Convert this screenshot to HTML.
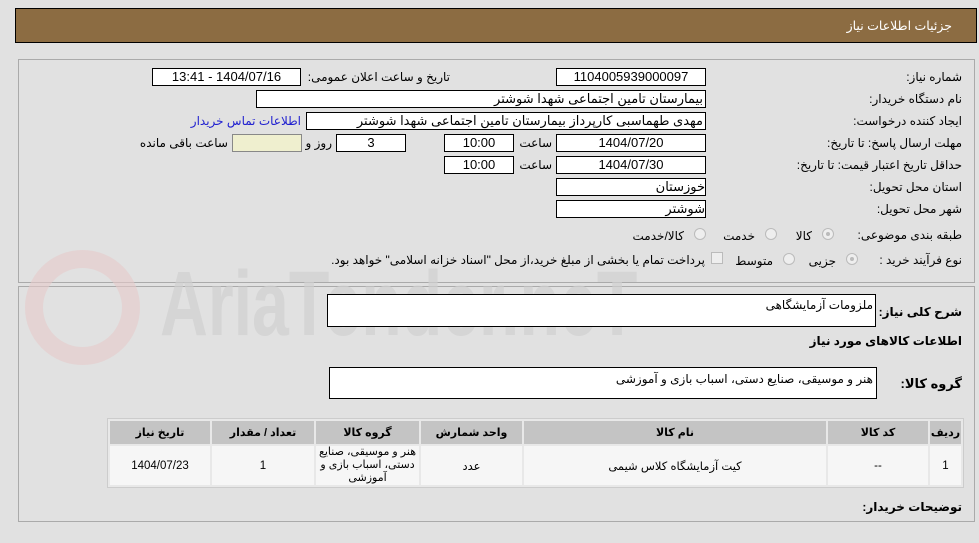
<!DOCTYPE html>
<html><head><meta charset="utf-8"><style>
body{margin:0;width:979px;height:543px;background:#e1e1e1;font-family:"Liberation Sans","DejaVu Sans",sans-serif;font-size:12px;color:#000;position:relative;overflow:hidden}
.a{position:absolute;white-space:nowrap}
.box{position:absolute;background:#fff;border:1px solid #000;box-sizing:border-box;height:18px;line-height:16px;font-size:13px;text-align:center;direction:rtl;overflow:hidden}
.l{position:absolute;direction:rtl;white-space:nowrap;font-size:12px;line-height:16px}
.r{right:17px}
.rad{position:absolute;width:12px;height:12px;border-radius:50%;border:1px solid #bbb;background:#eee;box-sizing:border-box}
.rad.on::after{content:"";position:absolute;left:3px;top:3px;width:4px;height:4px;border-radius:50%;background:#bbb}
table{border-collapse:separate;border-spacing:2px;position:absolute;left:107px;top:418px;width:857px;background:#e8e8e8;border:1px solid #ccc;direction:rtl;table-layout:fixed}
th{background:#c4c4c4;height:23px;font-size:11px;font-weight:bold;padding:0}
td{background:#f6f6f6;text-align:center;font-size:11.5px;height:39px;padding:0}
</style></head><body>
<div class="a" style="left:15px;top:8px;width:962px;height:35px;background:#8c6c42;border:1px solid #000;box-sizing:border-box"></div>
<div class="l" style="right:27px;top:18px;color:#fff;font-size:12.5px">جزئیات اطلاعات نیاز</div>
<div class="a" style="left:18px;top:59px;width:957px;height:224px;border:1px solid #aaa;box-sizing:border-box"></div>
<div class="a" style="left:18px;top:286px;width:957px;height:236px;border:1px solid #aaa;box-sizing:border-box"></div>
<!-- watermark -->
<div class="a" style="left:25px;top:250px;width:115px;height:115px;border-radius:50%;border:18px solid #e6caca;box-sizing:border-box;opacity:.6"></div>
<div class="a" style="left:160px;top:252px;font-size:92px;font-family:'Liberation Sans Narrow','Liberation Sans',sans-serif;font-weight:bold;color:#d0d0d0;transform:scaleX(0.72);transform-origin:left top;opacity:.7">AriaTender.neT</div>

<div class="l r" style="top:69px">شماره نیاز:</div>
<div class="box" style="left:556px;top:68px;width:150px">1104005939000097</div>
<div class="l" style="right:529px;top:69px">تاریخ و ساعت اعلان عمومی:</div>
<div class="box" style="left:152px;top:68px;width:149px">1404/07/16 - 13:41</div>

<div class="l r" style="top:91px">نام دستگاه خریدار:</div>
<div class="box" style="left:256px;top:90px;width:450px;text-align:right;padding-right:2px">بیمارستان تامین اجتماعی شهدا شوشتر</div>

<div class="l r" style="top:113px">ایجاد کننده درخواست:</div>
<div class="box" style="left:306px;top:112px;width:400px;text-align:right;padding-right:2px">مهدی طهماسبی کارپرداز بیمارستان تامین اجتماعی شهدا شوشتر</div>
<div class="l" style="right:678px;top:113px;color:#2020d0">اطلاعات تماس خریدار</div>

<div class="l r" style="top:135px">مهلت ارسال پاسخ: تا تاریخ:</div>
<div class="box" style="left:556px;top:134px;width:150px">1404/07/20</div>
<div class="l" style="right:427px;top:135px">ساعت</div>
<div class="box" style="left:444px;top:134px;width:70px">10:00</div>
<div class="box" style="left:336px;top:134px;width:70px">3</div>
<div class="l" style="right:647px;top:135px">روز و</div>
<div class="box" style="left:232px;top:134px;width:70px;background:#efefcf;border-color:#888"></div>
<div class="l" style="right:751px;top:135px">ساعت باقی مانده</div>

<div class="l r" style="top:157px">حداقل تاریخ اعتبار قیمت: تا تاریخ:</div>
<div class="box" style="left:556px;top:156px;width:150px">1404/07/30</div>
<div class="l" style="right:427px;top:157px">ساعت</div>
<div class="box" style="left:444px;top:156px;width:70px">10:00</div>

<div class="l r" style="top:179px">استان محل تحویل:</div>
<div class="box" style="left:556px;top:178px;width:150px;text-align:right">خوزستان</div>
<div class="l r" style="top:201px">شهر محل تحویل:</div>
<div class="box" style="left:556px;top:200px;width:150px;text-align:right">شوشتر</div>

<div class="l r" style="top:227px">طبقه بندی موضوعی:</div>
<div class="rad on" style="left:822px;top:228px"></div><div class="l" style="right:167px;top:228px">کالا</div>
<div class="rad" style="left:765px;top:228px"></div><div class="l" style="right:224px;top:228px">خدمت</div>
<div class="rad" style="left:694px;top:228px"></div><div class="l" style="right:295px;top:228px">کالا/خدمت</div>

<div class="l r" style="top:252px">نوع فرآیند خرید :</div>
<div class="rad on" style="left:846px;top:253px"></div><div class="l" style="right:143px;top:253px">جزیی</div>
<div class="rad" style="left:783px;top:253px"></div><div class="l" style="right:206px;top:253px">متوسط</div>
<div class="a" style="left:711px;top:252px;width:12px;height:12px;border:1px solid #bbb;background:#eee;box-sizing:border-box"></div>
<div class="l" style="right:274px;top:252px">پرداخت تمام یا بخشی از مبلغ خرید،از محل "اسناد خزانه اسلامی" خواهد بود.</div>

<div class="l r" style="top:304px;font-weight:bold">شرح کلی نیاز:</div>
<div class="a" style="left:327px;top:294px;width:549px;height:33px;background:#fff;border:1px solid #000;box-sizing:border-box"></div>
<div class="l" style="right:106px;top:297px">ملزومات آزمایشگاهی</div>
<div class="l r" style="top:333px;font-weight:bold">اطلاعات کالاهای مورد نیاز</div>
<div class="l r" style="top:376px;font-weight:bold;font-size:13px">گروه کالا:</div>
<div class="a" style="left:329px;top:367px;width:548px;height:32px;background:#fff;border:1px solid #000;box-sizing:border-box"></div>
<div class="l" style="right:106px;top:371px">هنر و موسیقی، صنایع دستی، اسباب بازی و آموزشی</div>

<table>
<colgroup><col style="width:31px"><col style="width:100px"><col style="width:302px"><col style="width:101px"><col style="width:103px"><col style="width:102px"><col></colgroup>
<tr><th>ردیف</th><th>کد کالا</th><th>نام کالا</th><th>واحد شمارش</th><th>گروه کالا</th><th>تعداد / مقدار</th><th>تاریخ نیاز</th></tr>
<tr><td>1</td><td>--</td><td>کیت آزمایشگاه کلاس شیمی</td><td>عدد</td><td style="line-height:13px;font-size:11px">هنر و موسیقی، صنایع دستی، اسباب بازی و آموزشی</td><td>1</td><td>1404/07/23</td></tr>
</table>
<div class="l r" style="top:499px;font-weight:bold">توضیحات خریدار:</div>
</body></html>
